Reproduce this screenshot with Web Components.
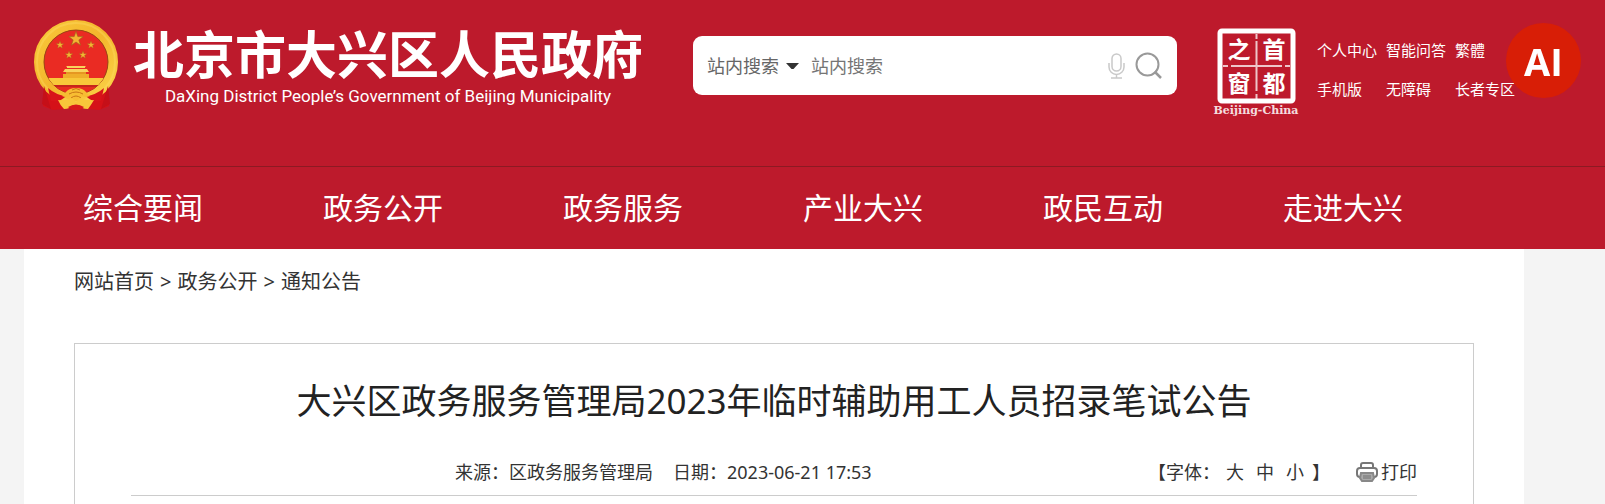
<!DOCTYPE html>
<html lang="zh-CN">
<head>
<meta charset="utf-8">
<meta name="viewport" content="width=device-width, initial-scale=1">
<title>大兴区政务服务管理局2023年临时辅助用工人员招录笔试公告</title>
<style>
    body {
        margin: 0;
        background: #f4f4f4;
        color: #333;
        font-family: "Noto Sans", "Noto Sans CJK SC", sans-serif;
        font-size: 18px;
        --brand: #bd1a2c;
        --line: #ccc;
    }
</style>
</head>
<body>
<site-header>
    <site-logo slot="logo">
        北京市大兴区人民政府
        <span slot="english">DaXing District People’s Government of Beijing Municipality</span>
    </site-logo>
    <search-box slot="search"></search-box>
    <capital-stamp slot="tools"></capital-stamp>
    <quick-links slot="tools"></quick-links>
</site-header>
<main-nav></main-nav>
<page-content>
    <bread-crumb></bread-crumb>
    <notice-article source="区政务服务管理局" date="2023-06-21 17:53">大兴区政务服务管理局2023年临时辅助用工人员招录笔试公告</notice-article>
</page-content>
<ai-button>AI</ai-button>

<script>
class SiteHeader extends HTMLElement {
    constructor() {
        super();
        this.attachShadow({ mode: 'open' });
        this.shadowRoot.innerHTML = `
            <style>
                :host {
                    display: block;
                    background: var(--brand);
                    color: #fff;
                    border-bottom: 1px solid #8c1a23;
                }

                header {
                    display: flex;
                    align-items: flex-start;
                    padding: 18px 90px 48px 34px;
                }

                .search {
                    flex: 1;
                    min-width: 300px;
                    margin: 18px 36px 0 50px;
                }

                .tools {
                    display: flex;
                    gap: 18px;
                    padding-top: 10px;
                }
            </style>
            <header>
                <slot name="logo"></slot>
                <div class="search"><slot name="search"></slot></div>
                <div class="tools"><slot name="tools"></slot></div>
            </header>
        `;
    }
}

class SiteLogo extends HTMLElement {
    constructor() {
        super();
        this.attachShadow({ mode: 'open' });
        this.shadowRoot.innerHTML = `
            <style>
                :host {
                    display: flex;
                    gap: 13px;
                    white-space: nowrap;
                }

                svg {
                    display: block;
                    flex: none;
                }

                .name {
                    font-size: 51px;
                    line-height: 52px;
                    font-weight: bold;
                    padding-top: 10px;
                }

                .english {
                    font: 17px/24px Roboto, sans-serif;
                    padding-top: 4px;
                    text-align: center;
                }
            </style>
            <svg width="86" height="94" viewBox="0 0 86 94" aria-hidden="true">
                <defs>
                    <linearGradient id="gold" x1="0" y1="0" x2="1" y2="1">
                        <stop offset="0" stop-color="#f9c83a"/>
                        <stop offset=".5" stop-color="#f3b52c"/>
                        <stop offset="1" stop-color="#fbd54a"/>
                    </linearGradient>
                    <clipPath id="disc"><circle cx="42" cy="44" r="32"/></clipPath>
                    <path id="star" d="M0-5 1.2-1.6 4.8-1.6 1.9.6 3 4.1 0 2-3 4.1-1.9.6-4.8-1.6-1.2-1.6z"/>
                </defs>
                <path d="M12 67 24 74 60 74 72 67 75 88 65 92 42 90 19 92 9 88z" fill="#d51118"/>
                <circle cx="42" cy="44" r="37" fill="none" stroke="url(#gold)" stroke-width="10"/>
                <circle cx="42" cy="44" r="39" fill="none" stroke="#ffe06b" stroke-width="2" opacity=".35"/>
                <circle cx="42" cy="44" r="32" fill="#ea2b23" stroke="#9c4a14" stroke-width="1"/>
                <g clip-path="url(#disc)">
                    <path d="M10 60h64v7H10z" fill="#f8c83a"/>
                    <path d="M29 56h26v4H29z" fill="#efae2a"/>
                    <path d="M31 51h22l2 3H29zM33 50h18v-1l1-1H32l1 1z" fill="#f9d35c"/>
                    <path d="M32 54h20v2H32z" fill="#e69722"/>
                    <path d="M10 67h64v2H10z" fill="#c6251b"/>
                    <path d="M10 69h64v8H10z" fill="#e82a20"/>
                </g>
                <g fill="#f4b432" stroke="#97651d" stroke-width=".4">
                    <use href="#star" transform="translate(42 21) scale(1.5)"/>
                    <use href="#star" transform="translate(26 27) scale(.8)"/>
                    <use href="#star" transform="translate(57 27) scale(.8)"/>
                    <use href="#star" transform="translate(35 37) scale(.8)"/>
                    <use href="#star" transform="translate(49 37) scale(.8)"/>
                </g>
                <path d="M14 70q8 7 18 8-6 7-15 5zM70 70q-8 7-18 8 6 7 15 5z" fill="#d8141a"/>
                <path d="M10 68 8 86 17 91 13 78zM74 68 76 86 67 91 71 78z" fill="#c50f18"/>
                <path d="M32 74q3-4 10-4t10 4l4 4q-5 2-8 0-2 5-6 5t-6-5q-4 2-8 0z" fill="#f7bd32"/>
                <path d="M38 72q4-3 8 0M35 76q7-4 14 0M37 80q5-4 10 0" fill="none" stroke="#c97616" stroke-width="1"/>
                <path d="M24 82q7 1 14-2l4 4 4-4q7 3 14 2-3 5-6 9-7 0-9-4-3 3-6 0-3 4-9 4-4-4-6-9z" fill="#f8c63a"/>
                <path d="M34 89q8-5 16 0l-4 3h-8z" fill="#d71a1b"/>
            </svg>
            <div>
                <div class="name"><slot></slot></div>
                <div class="english"><slot name="english"></slot></div>
            </div>
        `;
    }
}

class SearchBox extends HTMLElement {
    constructor() {
        super();
        this.attachShadow({ mode: 'open' });
        this.shadowRoot.innerHTML = `
            <style>
                :host {
                    display: block;
                }

                form {
                    display: flex;
                    align-items: center;
                    height: 59px;
                    padding: 0 15px 0 14px;
                    box-sizing: border-box;
                    border-radius: 9px;
                    background: #fff;
                }

                select, input {
                    font: inherit;
                    border: none;
                    outline: none;
                    padding: 0;
                    background: transparent;
                    color: #666;
                }

                select {
                    appearance: none;
                    width: 72px;
                    flex: none;
                }

                input {
                    flex: 1;
                    min-width: 0;
                    margin-left: 12px;
                }

                input::placeholder {
                    color: #757575;
                }

                .arrow {
                    flex: none;
                    margin-left: 7px;
                }

                button {
                    display: flex;
                    border: none;
                    background: none;
                    padding: 0;
                    margin-left: 10px;
                    cursor: pointer;
                }
            </style>
            <form>
                <select aria-label="搜索范围"><option>站内搜索</option></select>
                <svg class="arrow" width="13" height="8" viewBox="0 0 13 8" aria-hidden="true"><path d="M0 1h13L7.5 7h-2z" fill="#333"/></svg>
                <input type="text" placeholder="站内搜索" aria-label="搜索内容">
                <button type="button" aria-label="语音输入">
                    <svg width="17" height="26" viewBox="0 0 17 26" fill="none" stroke="#c9c9c9" stroke-width="1.5">
                        <rect x="4" y="1" width="9" height="17" rx="4.5"/>
                        <path d="M1 10v4a7.5 7.5 0 0 0 15 0v-4M8.5 22v3M3 25h11"/>
                    </svg>
                </button>
                <button type="submit" aria-label="搜索">
                    <svg width="27" height="27" viewBox="0 0 27 27" fill="none" stroke="#999" stroke-width="2">
                        <circle cx="12.5" cy="12.5" r="11"/>
                        <path d="m19.5 19.5 6.5 6.5" stroke-width="2.5"/>
                    </svg>
                </button>
            </form>
        `;
        this.shadowRoot.querySelector('form').addEventListener('submit', event => event.preventDefault());
    }
}

class CapitalStamp extends HTMLElement {
    constructor() {
        super();
        this.attachShadow({ mode: 'open' });
        this.shadowRoot.innerHTML = `
            <style>
                :host {
                    display: block;
                    flex: none;
                }

                svg {
                    display: block;
                }

                .seal {
                    font: bold 23px "Noto Sans CJK SC", sans-serif;
                }

                .caption {
                    font: bold 11px "DejaVu Serif", serif;
                    opacity: .85;
                }
            </style>
            <svg width="86" height="90" viewBox="0 0 86 90" fill="#fff" text-anchor="middle">
                <rect x="7" y="3" width="73" height="70" rx="2" fill="none" stroke="#fff" stroke-width="5"/>
                <path d="M43.5 6v5M43.5 13v50M43.5 66v5M10 38h5M18 38h51M72 38h5" stroke="#fff" stroke-width="2" opacity=".75"/>
                <text class="seal" x="26" y="30">之</text>
                <text class="seal" x="61" y="30">首</text>
                <text class="seal" x="26" y="64">窗</text>
                <text class="seal" x="61" y="64">都</text>
                <text class="caption" x="43" y="86">Beijing-China</text>
            </svg>
        `;
    }
}

class QuickLinks extends HTMLElement {
    constructor() {
        super();
        this.attachShadow({ mode: 'open' });
        const links = ['个人中心', '智能问答', '繁體', '手机版', '无障碍', '长者专区'];
        this.shadowRoot.innerHTML = `
            <style>
                :host {
                    display: block;
                    flex: none;
                }

                nav {
                    display: grid;
                    grid-template-columns: repeat(3, 60px);
                    gap: 15px 9px;
                    padding-top: 10px;
                    font-size: 15px;
                    line-height: 24px;
                }

                a {
                    color: #fff;
                    text-decoration: none;
                    white-space: nowrap;
                }
            </style>
            <nav>${links.map(text => `<a href="#">${text}</a>`).join('')}</nav>
        `;
    }
}

class MainNav extends HTMLElement {
    constructor() {
        super();
        this.attachShadow({ mode: 'open' });
        const items = ['综合要闻', '政务公开', '政务服务', '产业大兴', '政民互动', '走进大兴'];
        this.shadowRoot.innerHTML = `
            <style>
                :host {
                    display: block;
                    background: var(--brand);
                }

                nav {
                    display: grid;
                    grid-template-columns: repeat(6, 1fr);
                    max-width: 1440px;
                    margin-left: 23px;
                }

                a {
                    color: #fff;
                    font-size: 30px;
                    line-height: 82px;
                    text-align: center;
                    text-decoration: none;
                }
            </style>
            <nav>${items.map(text => `<a href="#">${text}</a>`).join('')}</nav>
        `;
    }
}

class PageContent extends HTMLElement {
    constructor() {
        super();
        this.attachShadow({ mode: 'open' });
        this.shadowRoot.innerHTML = `
            <style>
                :host {
                    display: block;
                    box-sizing: border-box;
                    max-width: 1500px;
                    margin-left: 24px;
                    padding: 0 50px;
                    background: #fff;
                }
            </style>
            <main><slot></slot></main>
        `;
    }
}

class BreadCrumb extends HTMLElement {
    constructor() {
        super();
        this.attachShadow({ mode: 'open' });
        this.shadowRoot.innerHTML = `
            <style>
                :host {
                    display: block;
                    font-size: 20px;
                    line-height: 30px;
                    padding: 18px 0 46px;
                }

                nav {
                    display: flex;
                    gap: 6px;
                }

                a {
                    color: inherit;
                    text-decoration: none;
                }
            </style>
            <nav>
                <a href="#">网站首页</a>
                <span>&gt;</span>
                <a href="#">政务公开</a>
                <span>&gt;</span>
                <a href="#">通知公告</a>
            </nav>
        `;
    }
}

class NoticeArticle extends HTMLElement {
    constructor() {
        super();
        this.attachShadow({ mode: 'open' });
        this.initialized = false;
    }

    connectedCallback() {
        if (!this.initialized) {
            this.initialized = true;
            this.render();
        }
    }

    render() {
        this.shadowRoot.innerHTML = `
            <style>
                :host {
                    display: block;
                    border: 1px solid var(--line);
                    border-bottom: none;
                    padding: 32px 56px 8px;
                }

                h1 {
                    margin: 0;
                    font-size: 35px;
                    line-height: 50px;
                    font-weight: normal;
                    text-align: center;
                    color: #222;
                }

                .meta {
                    display: flex;
                    align-items: center;
                    justify-content: space-between;
                    margin-top: 32px;
                    padding-bottom: 9px;
                    line-height: 28px;
                    border-bottom: 1px solid var(--line);
                    white-space: nowrap;
                }

                .info {
                    display: flex;
                    gap: 20px;
                    padding-left: 324px;
                }

                .actions {
                    display: flex;
                }

                .sizes {
                    display: flex;
                    gap: 12px;
                    margin: 0 8px 0 6px;
                }

                button {
                    display: flex;
                    align-items: center;
                    gap: 3px;
                    border: none;
                    background: none;
                    padding: 0;
                    font: inherit;
                    color: inherit;
                    cursor: pointer;
                }

                .print {
                    margin-left: 26px;
                }
            </style>
            <article>
                <h1><slot></slot></h1>
                <div class="meta">
                    <div class="info">
                        <span>来源：${this.getAttribute('source')}</span>
                        <span>日期：${this.getAttribute('date')}</span>
                    </div>
                    <div class="actions">
                        <span>【字体：</span>
                        <div class="sizes">
                            <button type="button">大</button>
                            <button type="button">中</button>
                            <button type="button">小</button>
                        </div>
                        <span>】</span>
                        <button type="button" class="print">
                            <svg width="22" height="20" viewBox="0 0 22 20" fill="none" stroke="#777" stroke-width="2" aria-hidden="true">
                                <path d="M5 6V3q0-2 2-2h8q2 0 2 2v3"/>
                                <path d="M4 15q-3 0-3-3V9q0-3 3-3h14q3 0 3 3v3q0 3-3 3"/>
                                <path d="M5 11h12l1 5-2 3H6l-2-3z" fill="#aaa" stroke="#888"/>
                                <path d="M7 14h8M7 16h8" stroke="#707070" stroke-width="1"/>
                            </svg>
                            打印
                        </button>
                    </div>
                </div>
            </article>
        `;
    }
}

class AiButton extends HTMLElement {
    constructor() {
        super();
        this.attachShadow({ mode: 'open' });
        this.shadowRoot.innerHTML = `
            <style>
                /* floats above the header */
                :host {
                    position: fixed;
                    top: 23px;
                    right: 24px;
                }

                button {
                    display: block;
                    width: 75px;
                    height: 75px;
                    padding: 0;
                    border: none;
                    border-radius: 50%;
                    background: #d81e06;
                    color: #fff;
                    font: bold 38px "Open Sans", sans-serif;
                    cursor: pointer;
                }
            </style>
            <button type="button"><slot></slot></button>
        `;
    }
}

customElements.define('site-header', SiteHeader);
customElements.define('site-logo', SiteLogo);
customElements.define('search-box', SearchBox);
customElements.define('capital-stamp', CapitalStamp);
customElements.define('quick-links', QuickLinks);
customElements.define('main-nav', MainNav);
customElements.define('page-content', PageContent);
customElements.define('bread-crumb', BreadCrumb);
customElements.define('notice-article', NoticeArticle);
customElements.define('ai-button', AiButton);
</script>
</body>
</html>
